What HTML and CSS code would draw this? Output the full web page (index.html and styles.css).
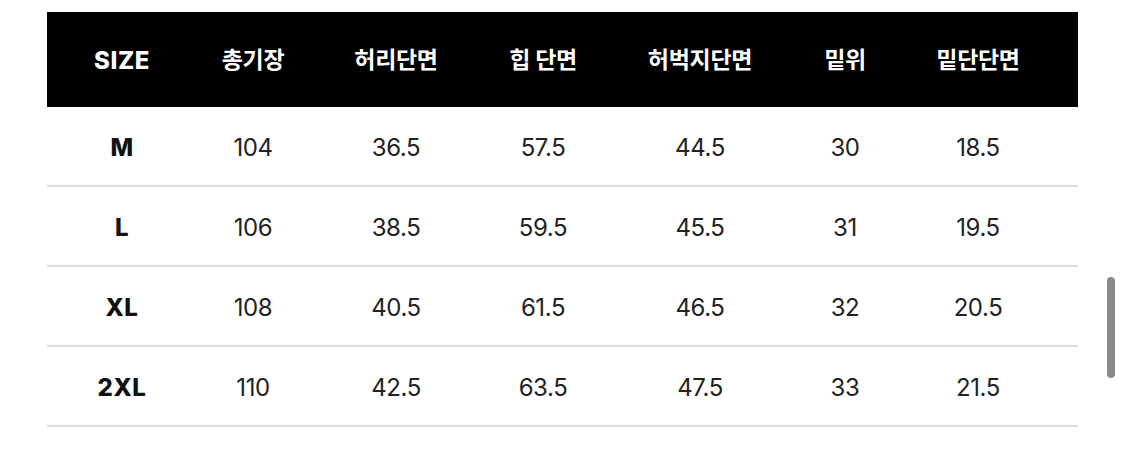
FILE: index.html
```html
<!DOCTYPE html>
<html lang="ko">
<head>
<meta charset="utf-8">
<title>Size chart</title>
<link rel="stylesheet" href="styles.css">
</head>
<body>
<div class="page">
  <div class="table">
    <div class="row head">
      <div class="cell latin">SIZE</div>
      <div class="cell">총기장</div>
      <div class="cell">허리단면</div>
      <div class="cell">힙 단면</div>
      <div class="cell">허벅지단면</div>
      <div class="cell">밑위</div>
      <div class="cell">밑단단면</div>
    </div>
    <div class="row">
      <div class="cell size">M</div>
      <div class="cell">104</div>
      <div class="cell">36.5</div>
      <div class="cell">57.5</div>
      <div class="cell">44.5</div>
      <div class="cell">30</div>
      <div class="cell">18.5</div>
    </div>
    <div class="row">
      <div class="cell size">L</div>
      <div class="cell">106</div>
      <div class="cell">38.5</div>
      <div class="cell">59.5</div>
      <div class="cell">45.5</div>
      <div class="cell">31</div>
      <div class="cell">19.5</div>
    </div>
    <div class="row">
      <div class="cell size">XL</div>
      <div class="cell">108</div>
      <div class="cell">40.5</div>
      <div class="cell">61.5</div>
      <div class="cell">46.5</div>
      <div class="cell">32</div>
      <div class="cell">20.5</div>
    </div>
    <div class="row">
      <div class="cell size">2XL</div>
      <div class="cell">110</div>
      <div class="cell">42.5</div>
      <div class="cell">63.5</div>
      <div class="cell">47.5</div>
      <div class="cell">33</div>
      <div class="cell">21.5</div>
    </div>
  </div>
  <div class="scrollbar"></div>
</div>
</body>
</html>
```

FILE: styles.css
```css
html, body {
  margin: 0;
  padding: 0;
  background: #ffffff;
}

.page {
  position: relative;
  width: 1125px;
  height: 454px;
  padding: 12px 0 0 47px;
  box-sizing: border-box;
  font-family: Inter, "Noto Sans CJK KR", sans-serif;
  color: #222222;
}

.table {
  width: 1031px;
  display: flex;
  flex-direction: column;
}

.row {
  display: grid;
  grid-template-columns: 150px 112px 174px 120px 194px 96px 170px;
  padding-right: 15px;
  padding-top: 4px;
  height: 80px;
  align-items: center;
  border-bottom: 2px solid #dcdcdc;
  box-sizing: border-box;
}

.row.head {
  height: 95px;
  background: #000000;
  color: #ffffff;
  font-weight: 700;
  border-bottom: none;
  padding-top: 2px;
  padding-bottom: 0;
}

.cell {
  text-align: center;
  font-size: 24px;
  line-height: 1;
  letter-spacing: -0.4px;
}

.head .cell {
  font-size: 23px;
  letter-spacing: -0.3px;
}

.head .cell.latin {
  font-size: 24px;
  font-weight: 800;
  letter-spacing: 0.6px;
}

.cell.size {
  font-weight: 800;
  color: #111111;
  letter-spacing: 0.6px;
}

.scrollbar {
  position: absolute;
  left: 1107px;
  top: 277px;
  width: 8px;
  height: 101px;
  border-radius: 4px;
  background: #8a8a8a;
}
```
